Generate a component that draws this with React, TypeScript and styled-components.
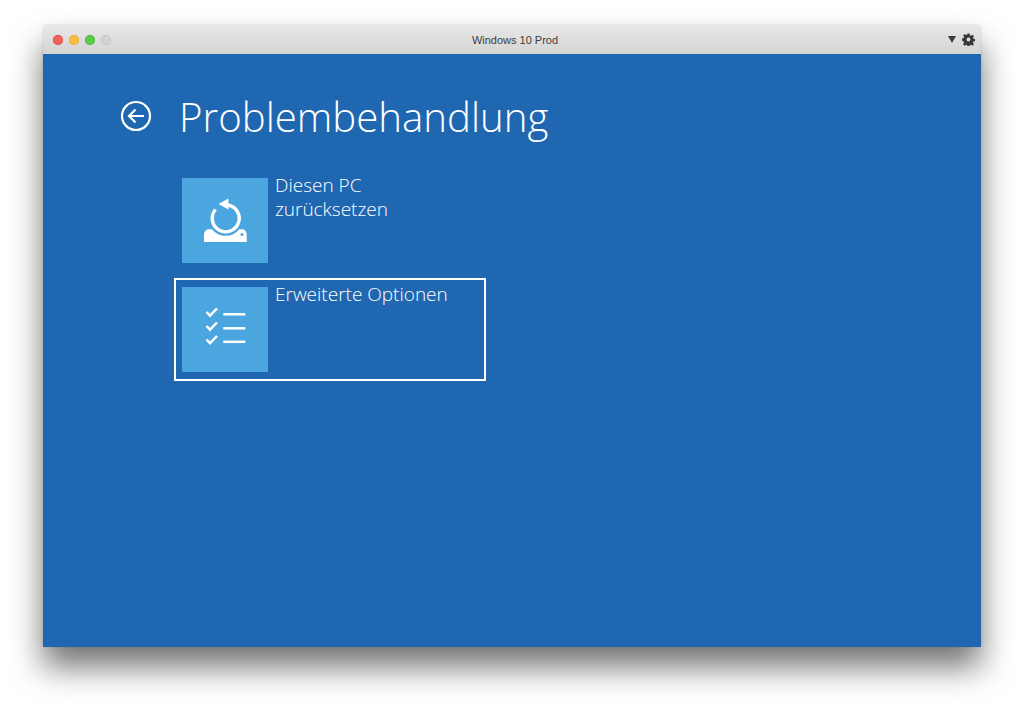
import React from "react";
import styled, { createGlobalStyle } from "styled-components";

const Global = createGlobalStyle`
  html, body { margin: 0; padding: 0; background: #fff; width: 1024px; height: 709px; overflow: hidden; }
`;

const Page = styled.div`
  width: 1024px;
  height: 709px;
  padding: 25px 43px 0;
  box-sizing: border-box;
`;

const Window = styled.div`
  width: 938px;
  height: 622px;
  display: flex;
  flex-direction: column;
  border-radius: 4px 4px 0 0;
  box-shadow: 0 20px 32px rgba(0, 0, 0, 0.55), 0 0 2px rgba(0, 0, 0, 0.2);
`;

const TitleBar = styled.div`
  height: 29px;
  flex: none;
  display: flex;
  align-items: center;
  padding: 0 6px 0 10px;
  border-radius: 4px 4px 0 0;
  background: linear-gradient(#e9e8e9, #d5d4d5);
`;

const Lights = styled.div`
  display: flex;
  gap: 6px;
`;

const Light = styled.span<{ $c: string; $b: string }>`
  width: 10px;
  height: 10px;
  border-radius: 50%;
  background: ${(p) => p.$c};
  box-shadow: inset 0 0 0 1px ${(p) => p.$b};
`;

const Title = styled.div`
  flex: 1;
  text-align: center;
  font: 11px "Liberation Sans", Arial, sans-serif;
  color: #3c3c3c;
  padding-right: 29px;
  padding-top: 1px;
`;

const Tools = styled.div`
  display: flex;
  align-items: center;
  gap: 6px;
`;

const Screen = styled.div`
  flex: 1;
  background: #1f67b1;
  padding: 36px 0 0 77px;
  color: #fff;
`;

const Header = styled.div`
  display: flex;
  align-items: center;
  gap: 27px;
  height: 55px;
`;

const BackButton = styled.div`
  display: flex;
  margin-top: -3px;
`;

const Heading = styled.h1`
  margin: -2px 0 0;
  font: 300 40.2px/55px "Open Sans", sans-serif;
  color: #fff;
`;

const Tiles = styled.div`
  display: flex;
  flex-direction: column;
  gap: 6px;
  margin-top: 24px;
  margin-left: 54px;
`;

const Tile = styled.div<{ $selected?: boolean }>`
  width: 312px;
  height: 103px;
  box-sizing: border-box;
  padding: 7px 7px 7px 6px;
  display: flex;
  gap: 7px;
  border: 2px solid ${(p) => (p.$selected ? "#fff" : "transparent")};
`;

const TileIcon = styled.div`
  width: 86px;
  height: 85px;
  flex: none;
  background: #4ba6df;
  display: flex;
  align-items: center;
  justify-content: center;
`;

const TileText = styled.div`
  font: 300 19px/23.500px "Open Sans", sans-serif;
  color: #fff;
  margin-top: -4px;
`;

const Back = () => (
  <svg width="32" height="32" viewBox="0 0 32 32" fill="none" stroke="#fff" strokeWidth="2.2">
    <circle cx="16" cy="16" r="14" />
    <path d="M24 16H9M15.500 9.500 9 16l6.500 6.500" />
  </svg>
);

const ResetIcon = () => (
  <svg width="86" height="85" viewBox="0 0 86 85" fill="#fff">
    <path d="M46 27A13.500 13.500 0 1 1 33.500 31.500" fill="none" stroke="#fff" strokeWidth="3.400" />
    <path d="M46.500 20.500V31.500L36.500 26z" />
    <path d="M22 64V57C22 54 24 51.300 27 51.300H30A17.500 17.500 0 0 0 57.300 51.300H60C63 51.300 64.700 54 64.700 57V64z" />
    <circle cx="60" cy="56.500" r="1.500" fill="#4ba6df" />
  </svg>
);

const ListIcon = () => (
  <svg width="86" height="85" viewBox="0 0 86 85" fill="none" stroke="#fff" strokeWidth="2.500">
    {[0, 14, 27.5].map((d) => (
      <g key={d} transform={`translate(0 ${d})`}>
        <path d="M24.500 25L28 28.700L35 21.500" />
        <path d="M41.300 27.300H63.300" />
      </g>
    ))}
  </svg>
);

const Gear = () => (
  <svg width="13" height="13" viewBox="0 0 24 24" fill="#3a3a3a">
    <path fillRule="evenodd" d="M10 1h4l.6 3.200 2 .8 2.700-1.800 2.800 2.800-1.900 2.700.9 2 3 .6v4l-3.100.6-.8 2 1.800 2.700-2.800 2.800-2.700-1.800-2 .8-.5 3.100h-4l-.6-3.100-2-.8-2.700 1.800-2.800-2.800 1.800-2.700-.8-2L0 14v-4l3.100-.6.800-2-1.800-2.700 2.800-2.800 2.700 1.800 2-.8zM12 8.500a3.500 3.500 0 1 0 0 7 3.500 3.500 0 0 0 0-7z" />
  </svg>
);

const Caret = () => (
  <svg width="8" height="7" viewBox="0 0 8 7" fill="#3a3a3a">
    <path d="M0 0h8L4 7z" />
  </svg>
);

export default function App() {
  return (
    <>
      <Global />
      <Page>
        <Window>
          <TitleBar>
            <Lights>
              <Light $c="#f0625a" $b="#e2534c" />
              <Light $c="#f7bd45" $b="#e9ae38" />
              <Light $c="#5fc84f" $b="#52b843" />
              <Light $c="#d3d2d3" $b="#c6c5c6" />
            </Lights>
            <Title>Windows 10 Prod</Title>
            <Tools>
              <Caret />
              <Gear />
            </Tools>
          </TitleBar>
          <Screen>
            <Header>
              <BackButton>
                <Back />
              </BackButton>
              <Heading>Problembehandlung</Heading>
            </Header>
            <Tiles>
              <Tile>
                <TileIcon>
                  <ResetIcon />
                </TileIcon>
                <TileText>
                  Diesen PC
                  <br />
                  zurücksetzen
                </TileText>
              </Tile>
              <Tile $selected>
                <TileIcon>
                  <ListIcon />
                </TileIcon>
                <TileText>Erweiterte Optionen</TileText>
              </Tile>
            </Tiles>
          </Screen>
        </Window>
      </Page>
    </>
  );
}
